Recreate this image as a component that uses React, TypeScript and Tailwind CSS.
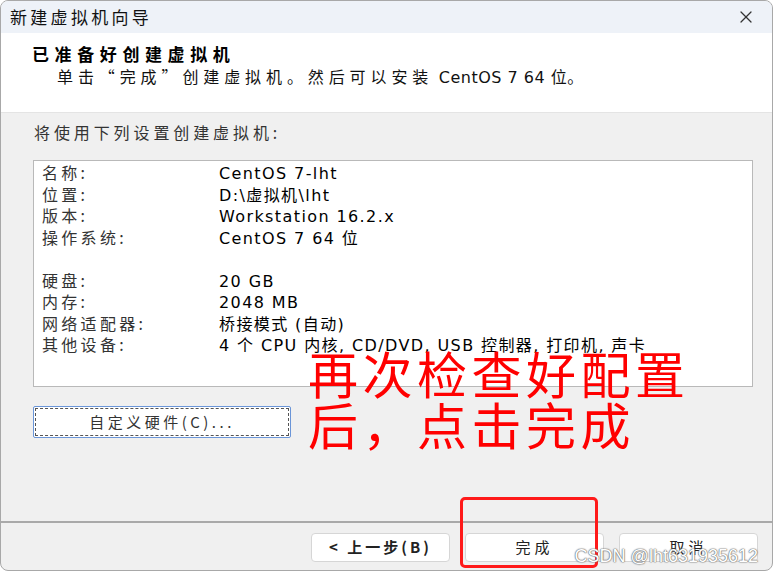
import React from 'react';
import { X } from 'lucide-react';

/**
 * Summary rows shown in the settings list box
 * An empty label marks the spacer row between groups
 */
const rows: { label: string; value: string }[] = [
  { label: '名称:', value: 'CentOS 7-lht' },
  { label: '位置:', value: 'D:\\虚拟机\\lht' },
  { label: '版本:', value: 'Workstation 16.2.x' },
  { label: '操作系统:', value: 'CentOS 7 64 位' },
  { label: '', value: '' },
  { label: '硬盘:', value: '20 GB' },
  { label: '内存:', value: '2048 MB' },
  { label: '网络适配器:', value: '桥接模式 (自动)' },
  { label: '其他设备:', value: '4 个 CPU 内核, CD/DVD, USB 控制器, 打印机, 声卡' },
];

const cjk = "font-['Noto_Sans_CJK_SC',sans-serif]";
const latin = "font-['DejaVu_Sans','Noto_Sans_CJK_SC',sans-serif]";

function WizardButton({ children }: { children: React.ReactNode }) {
  return (
    <div className="w-[139px] h-[29px] bg-white border border-[#d6d6d6] rounded-[4px] flex items-center justify-center text-[15px] text-[#222]">
      {children}
    </div>
  );
}

export default function App() {
  return (
    <div className={`relative w-[774px] h-[572px] bg-white ${cjk}`}>
      <div className="w-[773px] h-[571px] border border-[#a8a8a8] rounded-[8px] overflow-hidden flex flex-col bg-[#f0f0f0]">
        {/* Title bar */}
        <div className="h-[32px] shrink-0 bg-[#eef2f8] flex items-center justify-between pl-[9px] pr-[16px]">
          <span className="text-[17px] text-[#111] tracking-[3.3px]">新建虚拟机向导</span>
          <X size={20} strokeWidth={1.5} className="text-[#333]" />
        </div>

        {/* Header */}
        <div className="h-[80px] shrink-0 bg-white border-b border-[#e4e4e4] pl-[31px] pt-[9px]">
          <div className="text-[17px] font-bold text-black leading-[23px] tracking-[5.6px]">已准备好创建虚拟机</div>
          <div className="pl-[25px] text-[16px] text-[#111] leading-[22px]">
            <span className="tracking-[4.9px]">单击“完成”创建虚拟机。然后可以安装</span>
            <span className={`${latin} tracking-[0.5px]`}> CentOS 7 64 位。</span>
          </div>
        </div>

        {/* Body */}
        <div className="flex-1 flex flex-col pl-[32px] pr-[19px]">
          <div className="pt-[7px] h-[47px] text-[16px] text-[#333] tracking-[3.9px] pl-[1px]">
            将使用下列设置创建虚拟机:
          </div>
          <div className="h-[227px] bg-white border border-[#b9b9b9] pt-[1px] pl-[8px]">
            {rows.map((r, i) => (
              <div key={i} className="h-[21.5px] leading-[21.5px] flex items-baseline">
                <span className="w-[177px] shrink-0 text-[16px] text-[#333] tracking-[3.3px]">{r.label}</span>
                <span className={`${latin} text-[16px] text-black tracking-[1.4px] whitespace-nowrap`}>{r.value}</span>
              </div>
            ))}
          </div>
          <div className="mt-[19px] w-[258px] h-[32px] border border-[#6a95d8] rounded-[2px] p-[1px] bg-white">
            <div className="w-full h-full border border-dashed border-[#555] flex items-center justify-center text-[15px] text-[#333] tracking-[3.5px]">
              自定义硬件(C)...
            </div>
          </div>
        </div>

        {/* Footer */}
        <div className="h-[49px] shrink-0 border-t-2 border-[#a9a9a9] flex justify-end gap-[15px] pr-[14px] pt-[10px]">
          <WizardButton>
            <span className="font-semibold tracking-[3px]">&lt; 上一步(B)</span>
          </WizardButton>
          <WizardButton>
            <span className="tracking-[4px]">完成</span>
          </WizardButton>
          <WizardButton>
            <span className="tracking-[4px]">取消</span>
          </WizardButton>
        </div>
      </div>

      {/* Red annotation */}
      <div className="absolute left-[308px] top-[347px] text-[50px] leading-[51px] tracking-[4.5px] text-[#ff0000]">
        <div>再次检查好配置</div>
        <div>后，点击完成</div>
      </div>
      <div className="absolute left-[460px] top-[497px] w-[138px] h-[71px] border-[3px] border-[#ff1a1a] rounded-[5px]" />

      {/* Watermark */}
      <div className="absolute right-[16px] top-[543px] text-[18px] text-white font-['Liberation_Sans',sans-serif] [text-shadow:0_0_1px_#666,0_0_1px_#666,0_0_2px_#888]">
        CSDN @lht631935612
      </div>
    </div>
  );
}
